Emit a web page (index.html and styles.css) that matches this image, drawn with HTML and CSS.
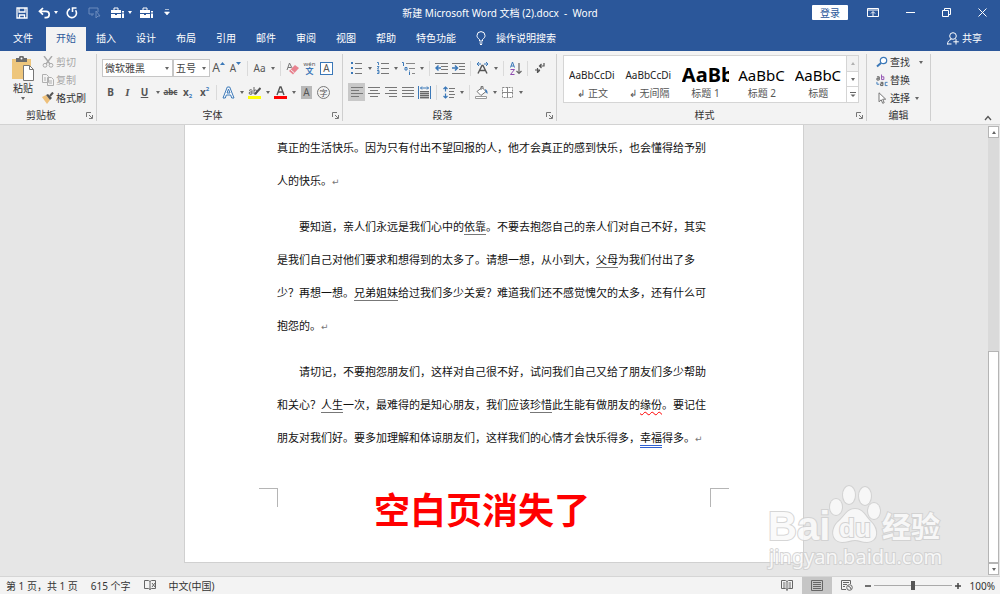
FILE: index.html
```
<!DOCTYPE html>
<html lang="zh-CN">
    <head>
        <meta charset="UTF-8">
        <meta name="viewport" content="width=device-width, initial-scale=1.0">
        <title>新建 Microsoft Word 文档 (2).docx - Word</title>
        <link rel="stylesheet" href="styles.css">
    </head>
    <body>
        <!-- title bar -->
        <header class="titlebar">
            <div class="quick">
                <button aria-label="保存"><svg width="12" height="12" viewBox="0 0 12 12"><path d="M1 1h10v10H1zM3 1v4h6V1M3.500 11V8h5v3" fill="none" stroke="#fff" stroke-width="1.300"/></svg></button>
                <button aria-label="撤消" class="wide"><svg width="13" height="12" viewBox="0 0 13 12"><path d="M5 1L1.500 4.300 5 7.600M2 4.300h6a3.200 3.200 0 0 1 0 6.400H6.500" fill="none" stroke="#fff" stroke-width="1.700"/></svg><i class="caret"></i></button>
                <button aria-label="重复"><svg width="12" height="12" viewBox="0 0 12 12"><path d="M4 1.800A4.600 4.600 0 1 0 9.500 3.200M10.500 1H6.500v4" fill="none" stroke="#fff" stroke-width="1.600"/></svg></button>
                <button aria-label="朗读" disabled><svg width="13" height="12" viewBox="0 0 13 12"><path d="M6 7H1V1h9v4M8 4v7l2-2 2 0zM4 7v2" fill="none" stroke="#6d8cbd"/></svg></button>
                <button aria-label="工具" class="wide"><svg width="14" height="12" viewBox="0 0 14 12"><path d="M0 3h10v3H0zM0 7h4v1h2V7h4v4H0zM11 4h2v1h-.5v2h.5v4h-2V7h.500V5H11z" fill="#fff"/><path d="M3 3V1h4v2" fill="none" stroke="#fff"/></svg><i class="caret"></i></button>
                <button aria-label="工具箱"><svg width="14" height="12" viewBox="0 0 14 12"><path d="M0 3h10v3H0zM0 7h4v1h2V7h4v4H0zM11 4h2v1h-.5v2h.5v4h-2V7h.500V5H11z" fill="#fff"/><path d="M3 3V1h4v2" fill="none" stroke="#fff"/></svg></button>
                <button aria-label="自定义快速访问工具栏"><svg width="6" height="7" viewBox="0 0 6 7"><path d="M1 .500h4M.500 3h5L3 6z" fill="#fff" stroke="#fff" stroke-width=".6"/></svg></button>
            </div>
            <h1>新建 Microsoft Word 文档 (2).docx &nbsp;-&nbsp; Word</h1>
            <div class="window">
                <button class="login">登录</button>
                <button aria-label="功能区显示选项"><svg width="12" height="9" viewBox="0 0 12 9"><path d="M.500.500h11v8H.500zM.500 2h11M6 8V4M4 5.500L6 3.500l2 2" fill="none" stroke="#fff"/></svg></button>
                <button aria-label="最小化"><svg width="9" height="9" viewBox="0 0 9 9"><path d="M0 4.500h9" stroke="#fff"/></svg></button>
                <button aria-label="还原"><svg width="9" height="9" viewBox="0 0 9 9"><path d="M.500 2.500h6v6h-6zM2.500 2.500v-2h6v6h-2" fill="none" stroke="#fff"/></svg></button>
                <button aria-label="关闭"><svg width="9" height="9" viewBox="0 0 9 9"><path d="M.500.500l8 8M8.500.500l-8 8" stroke="#fff"/></svg></button>
            </div>
        </header>

        <!-- tabs -->
        <nav class="tabs">
            <a href="#" class="file">文件</a>
            <a href="#" class="active">开始</a>
            <a href="#">插入</a>
            <a href="#">设计</a>
            <a href="#">布局</a>
            <a href="#">引用</a>
            <a href="#">邮件</a>
            <a href="#">审阅</a>
            <a href="#">视图</a>
            <a href="#">帮助</a>
            <a href="#">特色功能</a>
            <button class="tell"><svg width="10" height="14" viewBox="0 0 10 14"><path d="M3.500 10V8.500C2 7.300 1 6.300 1 4.600a4 4 0 0 1 8 0c0 1.700-1 2.700-2.500 3.900V10zM3.500 12h3M4 13.500h2" fill="none" stroke="#fff"/></svg>操作说明搜索</button>
            <button class="share"><svg width="12" height="13" viewBox="0 0 12 13"><circle cx="6" cy="4" r="3.300" fill="none" stroke="#fff"/><path d="M.500 12.500c0-3 1.500-4.600 4-5.200M9 7v5.500M6.300 9.800h5.500M.500 12h4" fill="none" stroke="#fff"/></svg>共享</button>
        </nav>

        <!-- ribbon -->
        <main class="ribbon">
            <section class="group clipboard">
                <div class="tools cols">
                    <button class="paste">
                        <svg width="24" height="25" viewBox="0 0 24 25"><path d="M1 3h19v20H1z" fill="#eec67c"/><path d="M5 2h3a2.500 2.500 0 0 1 5 0h3v4H5z" fill="#6b6b6b"/><circle cx="10.500" cy="2.500" r="1" fill="#fff"/><path d="M12.500 9.500h6l4 4v11h-10z" fill="#fff" stroke="#777"/><path d="M18.500 9.500v4h4" fill="none" stroke="#777"/></svg>
                        <span>粘贴</span>
                        <i class="caret"></i>
                    </button>
                    <div class="stack">
                        <button disabled><svg width="12" height="12" viewBox="0 0 12 12"><path d="M2 0l6 8M10 0L4 8" stroke="#aaa" stroke-width="1.400"/><circle cx="3" cy="9.300" r="1.900" fill="none" stroke="#aaa"/><circle cx="9" cy="9.300" r="1.900" fill="none" stroke="#aaa"/></svg>剪切</button>
                        <button disabled><svg width="12" height="12" viewBox="0 0 12 12"><path d="M.500.500h4l2 2v6h-6zM5.500 3.500h4l2 2v6h-6zM2 4h2M2 6h2M7 7h3M7 9h3" fill="#f3f3f3" stroke="#b0b0b0"/></svg>复制</button>
                        <button><svg width="12" height="12" viewBox="0 0 12 12"><path d="M0 5l4-2 4 5-3 4z" fill="#eec07a"/><path d="M4 3l2-1 4 4-2 2z" fill="#555"/><path d="M8 4l3-3.500" stroke="#555" stroke-width="2"/></svg>格式刷</button>
                    </div>
                </div>
                <footer><span>剪贴板</span><button class="launch" aria-label="剪贴板设置"><svg width="7" height="7" viewBox="0 0 7 7"><path d="M.500 5V.500H5M3 3l3 3M6.500 3v3.500H3" fill="none" stroke="#777"/></svg></button></footer>
            </section>

            <section class="group font">
                <div class="tools">
                    <div class="row">
                        <select class="family" aria-label="字体"><option>微软雅黑</option></select>
                        <select class="size" aria-label="字号"><option>五号</option></select>
                        <button class="ib big" aria-label="增大字号">A<svg width="5" height="4" viewBox="0 0 5 4"><path d="M0 3l2.500-3L5 3z" fill="#3b78b8"/></svg></button>
                        <button class="ib small" aria-label="减小字号">A<svg width="5" height="4" viewBox="0 0 5 4"><path d="M0 0h5L2.500 3z" fill="#3b78b8"/></svg></button>
                        <i class="sep"></i>
                        <button class="ib" aria-label="更改大小写">Aa</button><i class="caret"></i>
                        <i class="sep"></i>
                        <button class="ib" aria-label="清除格式"><svg width="13" height="13" viewBox="0 0 13 13"><path d="M1 8L3.500 1 6 6M2 5.500h3" fill="none" stroke="#777"/><path d="M3 9l6-6 4 3-6 6.500z" fill="#e8828f"/><path d="M4.500 7.500l4 3.500" stroke="#f3f3f3"/></svg></button>
                        <button class="ib pinyin" aria-label="拼音指南"><small>wén</small><b>文</b></button>
                        <button class="ib" aria-label="字符边框"><span class="boxed">A</span></button>
                    </div>
                    <div class="row">
                        <button class="ib bold">B</button>
                        <button class="ib italic">I</button>
                        <button class="ib under">U</button><i class="caret"></i>
                        <button class="ib strike">abc</button>
                        <button class="ib bold">x<small class="sub">2</small></button>
                        <button class="ib bold">x<small class="sup">2</small></button>
                        <i class="sep"></i>
                        <button class="ib" aria-label="文本效果"><svg width="13" height="13" viewBox="0 0 13 13"><path d="M1 12L5.300 1h2.400L12 12H9.700l-1-3H4.300l-1 3zM5 7h3L6.500 3z" fill="#fff" stroke="#3b78b8"/></svg></button><i class="caret"></i>
                        <button class="ib mark" aria-label="突出显示"><svg width="13" height="13" viewBox="0 0 13 13"><path d="M1 4.500q3-2 3 0V8Q1 9 1 7q0-1.500 3-1M6 1v7q3 1 3-2T6 4.500" fill="none" stroke="#666"/><path d="M7 8l5.500-6" stroke="#555" stroke-width="2"/><path d="M0 10h13v3H0z" fill="#ff0"/></svg></button><i class="caret"></i>
                        <button class="ib" aria-label="字体颜色"><svg width="13" height="13" viewBox="0 0 13 13"><path d="M3 9l3-8h1l3 8M4 6h5" fill="none" stroke="#555" stroke-width="1.400"/><path d="M0 10h13v3H0z" fill="#f00"/></svg></button><i class="caret"></i>
                        <button class="ib" aria-label="字符底纹"><span class="shaded">A</span></button>
                        <button class="ib" aria-label="带圈字符"><span class="circled">字</span></button>
                    </div>
                </div>
                <footer><span>字体</span><button class="launch" aria-label="字体设置"><svg width="7" height="7" viewBox="0 0 7 7"><path d="M.500 5V.500H5M3 3l3 3M6.500 3v3.500H3" fill="none" stroke="#777"/></svg></button></footer>
            </section>

            <section class="group para">
                <div class="tools">
                    <div class="row">
                        <button class="ib" aria-label="项目符号"><svg width="12" height="12" viewBox="0 0 12 12"><path d="M0 0h2v2H0zM0 5h2v2H0zM0 10h2v2H0z" fill="#3b78b8"/><path d="M4 1.500h7M4 6.500h7M4 11.500h7" stroke="#777"/></svg></button><i class="caret"></i>
                        <button class="ib" aria-label="编号"><svg width="12" height="12" viewBox="0 0 12 12"><path d="M0 .500h1.500V3M0 4.500h2L.500 7H2M0 8.500h2v3H0M.500 10H2" fill="none" stroke="#3b78b8" stroke-width=".9"/><path d="M4 1.500h8M4 6.500h8M4 11.500h8" stroke="#777"/></svg></button><i class="caret"></i>
                        <button class="ib" aria-label="多级列表"><svg width="13" height="13" viewBox="0 0 13 13"><path d="M0 .500h1.500V4M3 5.500h2v2.500H3zM7.500 8.500v1M7.500 10v3" fill="none" stroke="#3b78b8"/><path d="M4 1.500h9M7 6.500h6M10 11.500h3" stroke="#888"/></svg></button><i class="caret"></i>
                        <i class="sep"></i>
                        <button class="ib" aria-label="减少缩进量"><svg width="13" height="11" viewBox="0 0 13 11"><path d="M0 .500h13M6 3.500h7M6 6.500h7M0 10.500h13" stroke="#777"/><path d="M6 5H1M3.500 2.500L1 5l2.500 2.500" fill="none" stroke="#3b78b8" stroke-width="1.500"/></svg></button>
                        <button class="ib" aria-label="增加缩进量"><svg width="13" height="11" viewBox="0 0 13 11"><path d="M0 .500h13M7 3.500h6M7 6.500h6M0 10.500h13" stroke="#777"/><path d="M0 5h5M3 2.500L5.500 5 3 7.500" fill="none" stroke="#3b78b8" stroke-width="1.500"/></svg></button>
                        <i class="sep"></i>
                        <button class="ib" aria-label="中文版式"><svg width="13" height="12" viewBox="0 0 13 12"><path d="M2 11.500l4-8h1l4 8M4 8.500h5" fill="none" stroke="#555" stroke-width="1.400"/><path d="M5 2H1M3 0L1 2l2 2M8 2h4M10 0l2 2-2 2" fill="none" stroke="#3b78b8"/></svg></button><i class="caret"></i>
                        <i class="sep"></i>
                        <button class="ib" aria-label="排序"><svg width="12" height="13" viewBox="0 0 12 13"><path d="M.500 5.500L2.500 0l2 5.500M1 4h3" fill="none" stroke="#3b78b8"/><path d="M.500 7.500h4l-4 5h4" fill="none" stroke="#8f4bb0"/><path d="M9 1v10.500M6.500 9L9 11.500 11.500 9" fill="none" stroke="#666" stroke-width="1.200"/></svg></button>
                        <i class="sep"></i>
                        <button class="ib" aria-label="显示编辑标记"><svg width="10" height="11" viewBox="0 0 10 11"><path d="M9 0v3H5M6.500 1L4.500 3l2 2" fill="none" stroke="#555" stroke-width="1.200"/><path d="M5 7H0M2.500 5v5M5 7L2.500 9.500" fill="none" stroke="#555" stroke-width="1.200"/></svg></button>
                    </div>
                    <div class="row">
                        <button class="ib on" aria-label="左对齐"><svg width="12" height="10" viewBox="0 0 12 10"><path d="M0 .500h12M0 3.500h8M0 6.500h12M0 9.500h8" stroke="#777"/></svg></button>
                        <button class="ib" aria-label="居中"><svg width="12" height="10" viewBox="0 0 12 10"><path d="M0 .500h12M2 3.500h8M0 6.500h12M2 9.500h8" stroke="#777"/></svg></button>
                        <button class="ib" aria-label="右对齐"><svg width="12" height="10" viewBox="0 0 12 10"><path d="M0 .500h12M4 3.500h8M0 6.500h12M4 9.500h8" stroke="#777"/></svg></button>
                        <button class="ib" aria-label="两端对齐"><svg width="12" height="10" viewBox="0 0 12 10"><path d="M0 .500h12M0 3.500h12M0 6.500h12M0 9.500h12" stroke="#777"/></svg></button>
                        <button class="ib" aria-label="分散对齐"><svg width="13" height="13" viewBox="0 0 13 13"><path d="M2 5h9v8H2z" fill="#b5b5b5"/><path d="M.500 0v13M12.500 0v13M2.500 2h8M4 .500L2.500 2 4 3.500M9 .500L10.500 2 9 3.500" fill="none" stroke="#3b78b8"/><path d="M2 5.500h9M2 7.500h9M2 9.500h9M2 11.500h9" stroke="#666"/></svg></button>
                        <i class="sep"></i>
                        <button class="ib" aria-label="行距"><svg width="12" height="13" viewBox="0 0 12 13"><path d="M2.500 1v4.500M2.500 12V7.500M.500 3l2-2 2 2M.500 10l2 2 2-2" fill="none" stroke="#3b78b8" stroke-width="1.200"/><path d="M6 2.500h6M6 5.500h5M6 8.500h6M6 11.500h5" stroke="#777"/></svg></button><i class="caret"></i>
                        <i class="sep"></i>
                        <button class="ib" aria-label="底纹"><svg width="14" height="13" viewBox="0 0 14 13"><path d="M2 5.500l5-4 4 4-5 4zM6 4V.500h2V3" fill="#fff" stroke="#777"/><path d="M10 3q3 1 2.500 5L10.500 6z" fill="#3b78b8"/><path d="M.500 10.500h11v2H.500z" fill="#fff" stroke="#999"/></svg></button><i class="caret"></i>
                        <button class="ib" aria-label="边框"><svg width="11" height="11" viewBox="0 0 11 11"><path d="M.500.500h10v10H.500z" fill="#fff" stroke="#888" stroke-dasharray="2 1"/><path d="M5.500 0v11M0 5.500h11" stroke="#888"/></svg></button><i class="caret"></i>
                    </div>
                </div>
                <footer><span>段落</span><button class="launch" aria-label="段落设置"><svg width="7" height="7" viewBox="0 0 7 7"><path d="M.500 5V.500H5M3 3l3 3M6.500 3v3.500H3" fill="none" stroke="#777"/></svg></button></footer>
            </section>

            <section class="group styles">
                <div class="gallery">
                    <button class="style"><span class="sample">AaBbCcDi</span><span>↲ 正文</span></button>
                    <button class="style"><span class="sample">AaBbCcDi</span><span>↲ 无间隔</span></button>
                    <button class="style"><span class="sample h1">AaBb</span><span>标题 1</span></button>
                    <button class="style"><span class="sample h2">AaBbC</span><span>标题 2</span></button>
                    <button class="style"><span class="sample h2">AaBbC</span><span>标题</span></button>
                    <div class="pager">
                        <button aria-label="上一行" disabled><i class="caret up"></i></button>
                        <button aria-label="下一行"><i class="caret"></i></button>
                        <button aria-label="其他"><svg width="6" height="7" viewBox="0 0 6 7"><path d="M0 1.500h6" stroke="#666"/><path d="M.500 3.500h5L3 6z" fill="#666"/></svg></button>
                    </div>
                </div>
                <footer><span>样式</span><button class="launch" aria-label="样式设置"><svg width="7" height="7" viewBox="0 0 7 7"><path d="M.500 5V.500H5M3 3l3 3M6.500 3v3.500H3" fill="none" stroke="#777"/></svg></button></footer>
            </section>

            <section class="group edit">
                <div class="tools stack">
                    <button><svg width="12" height="12" viewBox="0 0 12 12"><circle cx="7.500" cy="4.500" r="3.200" fill="#fff" stroke="#3b78b8" stroke-width="1.200"/><path d="M5 7L1 10.500" stroke="#3b78b8" stroke-width="2"/></svg>查找<i class="caret far"></i></button>
                    <button><svg width="12" height="13" viewBox="0 0 13 13"><path d="M1 2.500h2.500V6H1V4h2.500" fill="none" stroke="#555"/><path d="M6 0v5.500h2.500v-3H6" fill="none" stroke="#8f4bb0"/><path d="M5 8.500h2.500V12H5v-2h2.500" fill="none" stroke="#555"/><path d="M12.500 8.500H10V12h2.500M1 8v2.500h2.500" fill="none" stroke="#3b78b8"/></svg>替换</button>
                    <button><svg width="12" height="12" viewBox="0 0 12 12"><path d="M3 .800v9l2.200-2 1.500 3.500 1.500-.6-1.500-3.500h3z" fill="#fff" stroke="#777"/></svg>选择<i class="caret"></i></button>
                </div>
                <footer><span>编辑</span></footer>
            </section>
            <button class="collapse" aria-label="折叠功能区"><svg width="8" height="6" viewBox="0 0 8 6"><path d="M1 5l3-3.500L7 5" fill="none" stroke="#555" stroke-width="1.300"/></svg></button>
        </main>

        <!-- document -->
        <div class="work">
            <div class="desk">
                <article class="page">
                    <p class="cont">真正的生活快乐。因为只有付出不望回报的人，他才会真正的感到快乐，也会懂得给予别人的快乐。<i class="ret">↵</i></p>
                    <p>要知道，亲人们永远是我们心中的<u>依靠</u>。不要去抱怨自己的亲人们对自己不好，其实是我们自己对他们要求和想得到的太多了。请想一想，从小到大，<u>父母</u>为我们付出了多少？再想一想。<u>兄弟姐妹</u>给过我们多少关爱？难道我们还不感觉愧欠的太多，还有什么可抱怨的。<i class="ret">↵</i></p>
                    <p>请切记，不要抱怨朋友们，这样对自己很不好，试问我们自己又给了朋友们多少帮助和关心？<u>人生</u>一次，最难得的是知心朋友，我们应该<u>珍惜</u>此生能有做朋友的<u class="spell">缘份</u>。要记住朋友对我们好。要多加理解和体谅朋友们，这样我们的心情才会快乐得多，<u class="grammar">幸福</u>得多。<i class="ret">↵</i></p>
                    <div class="foot">
                        <i class="corner left"></i>
                        <strong>空白页消失了</strong>
                        <i class="corner right"></i>
                    </div>
                </article>
            </div>
            <div class="scroll">
                <button aria-label="向上滚动"><i class="caret up"></i></button>
                <div class="track"><div class="thumb"></div></div>
                <button aria-label="向下滚动"><i class="caret"></i></button>
            </div>
            <svg class="watermark" width="184" height="90" viewBox="0 0 184 90">
                <g fill="#fafafa" stroke="#cfcfcf" stroke-width="2" paint-order="stroke" opacity=".85">
                    <text class="wm-bai" x="3" y="56">Bai</text>
                    <ellipse cx="71" cy="23" rx="6" ry="8"/>
                    <ellipse cx="84" cy="11" rx="6" ry="9"/>
                    <ellipse cx="100" cy="12" rx="6" ry="9"/>
                    <ellipse cx="109" cy="27" rx="6" ry="8"/>
                    <path d="M90 25c8 0 10 7 16 13 7 7 8 19-4 20-5 0-8-2-12-2s-8 2-13 2c-11-1-11-13-4-20 7-6 9-13 17-13z"/>
                    <text class="wm-du" x="74" y="53">du</text>
                    <text class="wm-cn" x="117" y="54">经验</text>
                    <text class="wm-url" x="4" y="80">jingyan.baidu.com</text>
                </g>
            </svg>
        </div>

        <!-- status bar -->
        <footer class="status">
            <span>第 1 页，共 1 页</span>
            <span>615 个字</span>
            <svg width="12" height="11" viewBox="0 0 12 11"><path d="M6 1.500L4.500.500h-4v8h4L6 9.500zM6 1.500L7.500.500h4v8h-4L6 9.500M8 3l3 4M11 3L8 7" fill="none" stroke="#666"/></svg>
            <span>中文(中国)</span>
            <div class="views">
                <button aria-label="阅读视图"><svg width="12" height="11" viewBox="0 0 12 11"><path d="M6 1.500L4.500.500h-4v8h4L6 9.500 7.500 8.500h4v-8h-4zV11M2 3h2.500M2 5h2.500M2 7h2.500M7.500 3H10M7.500 5H10M7.500 7H10" fill="none" stroke="#666"/></svg></button>
                <button class="on" aria-label="页面视图"><svg width="12" height="11" viewBox="0 0 12 11"><path d="M.500.500h11v10H.500zM2 2.500h8M2 4.500h8M2 6.500h8M2 8.500h8" fill="none" stroke="#666"/></svg></button>
                <button aria-label="Web 版式视图"><svg width="12" height="11" viewBox="0 0 12 11"><path d="M5 9.500H.500v-9h9V4M2 2.500h6M2 4.500h4M2 6.500h2" fill="none" stroke="#666"/><circle cx="8.500" cy="7.500" r="2.800" fill="#f3f3f3" stroke="#666"/><path d="M7 6l2 1 1 2" fill="none" stroke="#666"/></svg></button>
                <button class="zoom" aria-label="缩小"><svg width="6" height="6" viewBox="0 0 6 6"><path d="M0 3h6" stroke="#444" stroke-width="1.500"/></svg></button>
                <input type="range" min="0" max="100" value="50" aria-label="缩放">
                <button class="zoom" aria-label="放大"><svg width="6" height="6" viewBox="0 0 6 6"><path d="M0 3h6M3 0v6" stroke="#444" stroke-width="1.500"/></svg></button>
                <span>100%</span>
            </div>
        </footer>
    </body>
</html>
```
FILE: styles.css
```
* {
    box-sizing: border-box;
}
body {
    margin: 0;
    height: 100vh;
    display: flex;
    flex-direction: column;
    overflow: hidden;
    background-color: #e6e6e6;
    color: #333;
    font: 10px/14px "Noto Sans", "Noto Sans CJK SC", sans-serif;
}
button {
    display: flex;
    align-items: center;
    justify-content: center;
    border: 0;
    padding: 0;
    background: none;
    color: inherit;
    font: inherit;
    white-space: nowrap;
}
svg {
    flex: none;
    display: block;
}
.caret {
    flex: none;
    width: 9px;
    display: flex;
    justify-content: center;
}
.caret::after {
    content: "";
    border: 2px solid transparent;
    border-top: 3px solid #666;
    border-bottom: 0;
}
.caret.up::after {
    border-top: 0;
    border-bottom: 3px solid #666;
}

/* title bar */
.titlebar {
    display: grid;
    grid-template-columns: 1fr auto 1fr;
    align-items: center;
    height: 25px;
    background-color: #2b579a;
    color: white;
}
.titlebar h1 {
    margin: 0;
    font-size: 10px;
    font-weight: normal;
}
.titlebar .caret::after {
    border-top-color: white;
}
.quick {
    display: flex;
    align-items: center;
    gap: 10px;
    padding-left: 16px;
}
.quick .wide {
    margin-right: -4px;
}
.window {
    display: flex;
    align-items: center;
    justify-content: flex-end;
    gap: 27px;
    padding-right: 13px;
}
.login {
    width: 36px;
    height: 15px;
    margin-right: -8px;
    background-color: white;
    color: #2b579a;
    border-radius: 1px;
}

/* tabs */
.tabs {
    display: flex;
    align-items: stretch;
    height: 26px;
    padding-top: 2px;
    background-color: #2b579a;
    color: white;
}
.tabs a {
    padding: 0 10px;
    line-height: 22px;
    color: white;
    text-decoration: none;
}
.tabs .file {
    padding: 0 13px;
}
.tabs .active {
    background-color: #f3f3f3;
    color: #2b579a;
}
.tell, .share {
    gap: 10px;
    padding: 0 10px 2px;
}
.share {
    gap: 3px;
    margin-left: auto;
    padding-right: 18px;
}

/* ribbon */
.ribbon {
    display: flex;
    align-items: stretch;
    padding: 3px 0;
    background-color: #f3f3f3;
    border-bottom: 1px solid #d2d2d2;
}
.group {
    flex: none;
    display: flex;
    flex-direction: column;
    justify-content: space-between;
    height: 67px;
    border-right: 1px solid #cfcfcf;
}
.group footer {
    display: flex;
    align-items: center;
    height: 12px;
}
.group footer span {
    flex: 1;
    text-align: center;
}
.launch {
    width: 14px;
}
.clipboard {
    width: 97px;
}
.font {
    width: 246px;
}
.para {
    width: 214px;
}
.styles {
    width: 310px;
}
.edit {
    width: 64px;
}
.cols {
    display: flex;
    align-items: flex-start;
}
.paste {
    flex-direction: column;
    width: 42px;
    padding: 2px 0 0 4px;
}
.paste span {
    line-height: 14px;
}
.paste .caret {
    height: 7px;
    align-items: center;
}
.stack button {
    height: 18px;
    gap: 2px;
}
.clipboard .stack {
    margin-top: -1px;
}
.stack button:disabled {
    color: #a6a6a6;
}
.edit .stack {
    margin-top: -1px;
    padding-left: 9px;
}
.far {
    margin-left: 4px;
}
.font .tools, .para .tools {
    padding-left: 5px;
}
.row {
    display: flex;
    align-items: center;
    height: 18px;
    margin: 5px 0 6px;
}
.row select {
    height: 18px;
    padding: 0 2px;
    border: 1px solid #c6c6c6;
    border-radius: 0;
    appearance: none;
    background: white url("data:image/svg+xml,%3Csvg xmlns='http://www.w3.org/2000/svg' width='4' height='3'%3E%3Cpath d='M0 0h4L2 3z' fill='%23666'/%3E%3C/svg%3E") no-repeat right 3px center;
    color: #444;
    font: inherit;
}
.row .family {
    width: 71px;
}
.row .size {
    width: 37px;
}
.sep {
    flex: none;
    width: 1px;
    height: 15px;
    margin: 0 3px;
    background-color: #dadada;
}
.ib {
    flex: none;
    width: 17px;
    height: 18px;
    color: #555;
}
.ib.on {
    background-color: #c8c8c8;
}
.ib.big {
    font-size: 12px;
}
.ib.big svg, .ib.small svg {
    align-self: flex-start;
    margin-top: 3px;
}
.ib.bold {
    font-weight: bold;
}
.ib small {
    font-size: 6px;
    line-height: 6px;
    color: #3b78b8;
}
.ib .sub {
    align-self: flex-end;
    margin-bottom: 2px;
}
.ib .sup {
    align-self: flex-start;
    margin-top: 3px;
}
.ib.italic {
    font: italic bold 11px "Liberation Serif", serif;
}
.ib.under {
    font-weight: bold;
    text-decoration: underline;
}
.ib.strike {
    font-size: 8px;
    font-weight: bold;
    text-decoration: line-through;
}
.ib.pinyin {
    flex-direction: column;
}
.ib.pinyin small {
    color: #555;
}
.pinyin b {
    font-size: 8px;
    line-height: 8px;
    color: #3b78b8;
}
.boxed, .shaded, .circled {
    width: 13px;
    height: 13px;
    line-height: 11px;
    border: 1px solid #3b78b8;
    background-color: white;
}
.shaded {
    width: 11px;
    border: 0;
    line-height: 13px;
    background-color: #b8b8b8;
}
.circled {
    border-color: #777;
    border-radius: 50%;
    background: none;
    font-size: 8px;
}

/* styles gallery */
.gallery {
    display: flex;
    height: 48px;
    margin: 1px 7px 0 6px;
    border: 1px solid #d5d5d5;
    background-color: white;
}
.style {
    flex: 1;
    min-width: 0;
    flex-direction: column;
    align-items: stretch;
    padding: 4px 4px 0 5px;
    color: #555;
    line-height: 13px;
}
.sample {
    height: 24px;
    line-height: 24px;
    overflow: hidden;
    text-align: left;
    font-size: 10px;
    color: #222;
}
.sample.h1 {
    font-size: 20px;
    font-weight: bold;
    color: black;
}
.sample.h2 {
    font-size: 15px;
    color: black;
}
.pager {
    flex: none;
    width: 12px;
    display: flex;
    flex-direction: column;
    border-left: 1px solid #d5d5d5;
}
.pager button {
    flex: 1;
}
.pager button + button {
    border-top: 1px solid #d5d5d5;
}
.pager button:disabled {
    background-color: #e6e6e6;
    opacity: 0.5;
}
.collapse {
    align-self: flex-end;
    margin: 0 8px 0 auto;
}

/* document */
.work {
    position: relative;
    flex: 1;
    min-height: 0;
    display: flex;
}
.desk {
    flex: 1;
    display: flex;
    justify-content: center;
    align-items: flex-start;
    overflow: hidden;
}
.page {
    width: 620px;
    padding: 6px 0 28px;
    background-color: white;
    border: 1px solid #d0d0d0;
    border-top: 0;
    color: #111;
    font-size: 11px;
    line-height: 33px;
}
.page p {
    margin: 0 95px 13px 92px;
    text-indent: 2em;
}
.page .cont {
    text-indent: 0;
}
.page u {
    text-decoration: underline 1px #777;
    text-underline-offset: 3px;
}
.page .spell {
    text-decoration: underline wavy 1px red;
    text-underline-offset: 2px;
}
.page .grammar {
    text-decoration: underline double 1px #2f5fd0;
}
.ret {
    font: 9px "DejaVu Sans", sans-serif;
    text-indent: 0;
    color: #777;
}
.foot {
    display: flex;
    justify-content: space-between;
    margin: 34px 74px 0;
}
.foot strong {
    padding-right: 24px;
    color: red;
    font-size: 36px;
    line-height: 46px;
}
.corner {
    width: 19px;
    height: 19px;
    border: 1px solid #b5b5b5;
    border-width: 1px 1px 0 0;
}
.corner.right {
    border-width: 1px 0 0 1px;
}
.scroll {
    flex: none;
    width: 12px;
    display: flex;
    flex-direction: column;
    padding: 1px 1px 1px 0;
}
.scroll button {
    height: 12px;
    border: 1px solid #b5b5b5;
    background-color: white;
}
.track {
    flex: 1;
    display: flex;
    flex-direction: column;
    justify-content: flex-end;
    background-color: #dadada;
}
.thumb {
    height: 50%;
    border: 1px solid #b5b5b5;
    background-color: white;
}
.watermark {
    position: absolute;
    right: 51px;
    bottom: 2px;
}
.wm-bai {
    font: bold 40px "Liberation Sans", sans-serif;
}
.wm-du {
    font: bold 26px "Liberation Sans", sans-serif;
}
.wm-cn {
    font: bold 29px "Noto Sans CJK SC", sans-serif;
}
.wm-url {
    font: 20px "Noto Sans", sans-serif;
}

/* status bar */
.status {
    display: flex;
    align-items: center;
    gap: 13px;
    height: 18px;
    padding-left: 6px;
    background-color: #f3f3f3;
    border-top: 1px solid #d5d5d5;
}
.views {
    display: flex;
    align-items: center;
    align-self: stretch;
    margin-left: auto;
    padding-right: 5px;
}
.views button {
    width: 30px;
    align-self: stretch;
}
.views .on {
    background-color: #c6c6c6;
}
.views .zoom {
    width: 12px;
}
.views span {
    padding-left: 6px;
}
.views input {
    width: 78px;
    height: 10px;
    margin: 0;
    appearance: none;
    background: linear-gradient(#aaa, #aaa) no-repeat center / 100% 1px;
}
.views input::-webkit-slider-thumb {
    appearance: none;
    width: 4px;
    height: 9px;
    background-color: #555;
}
```
